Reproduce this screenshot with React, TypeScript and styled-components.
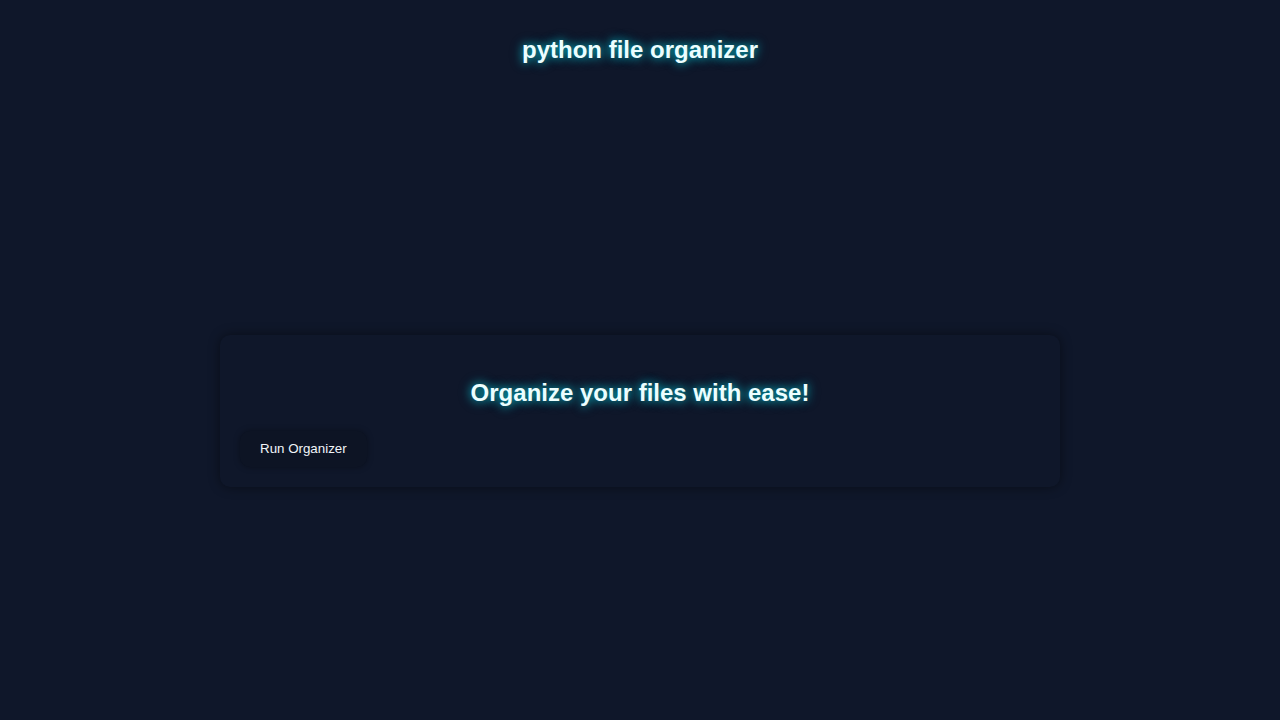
import React from "react";
import styled, { createGlobalStyle } from "styled-components";

const GlobalStyle = createGlobalStyle`
  html, body {
    margin: 0;
    padding: 0;
    background: #0f172a;
    font-family: "Liberation Sans", Arial, sans-serif;
    color: #e6fdfd;
  }
  #root {
    min-height: 100vh;
  }
`;

const Page = styled.div`
  display: flex;
  flex-direction: column;
  align-items: center;
  min-height: 100vh;
  background: #0f172a;
`;

const Header = styled.header`
  padding-top: 36px;
  width: 100%;
  display: flex;
  justify-content: center;
`;

const Title = styled.h1`
  margin: 0;
  font-size: 24px;
  line-height: 28px;
  font-weight: 700;
  color: #ecfeff;
  text-shadow: 0 0 8px rgba(0, 230, 240, 0.75), 0 0 14px rgba(0, 200, 220, 0.35);
`;

const Card = styled.section`
  margin-top: 271px;
  width: 840px;
  box-sizing: border-box;
  padding: 20px;
  border-radius: 10px;
  background: #0f172a;
  box-shadow: 0 0 12px rgba(0, 0, 0, 0.45);
`;

const Heading = styled.h2`
  margin: 24px 0 24px;
  text-align: center;
  font-size: 24px;
  line-height: 28px;
  font-weight: 700;
  color: #ecfeff;
  text-shadow: 0 0 8px rgba(0, 230, 240, 0.75), 0 0 14px rgba(0, 200, 220, 0.35);
`;

const Button = styled.button`
  display: block;
  padding: 10px 20px;
  font-family: "Liberation Sans", Arial, sans-serif;
  font-size: 13.33px;
  line-height: 16px;
  color: #f1f5f9;
  background: #0d1424;
  border: none;
  border-radius: 10px;
  box-shadow: 0 0 6px rgba(0, 0, 0, 0.35);
  cursor: pointer;
`;

export default function App() {
  return (
    <>
      <GlobalStyle />
      <Page>
        <Header>
          <Title>python file organizer</Title>
        </Header>
        <Card>
          <Heading>Organize your files with ease!</Heading>
          <Button>Run Organizer</Button>
        </Card>
      </Page>
    </>
  );
}
